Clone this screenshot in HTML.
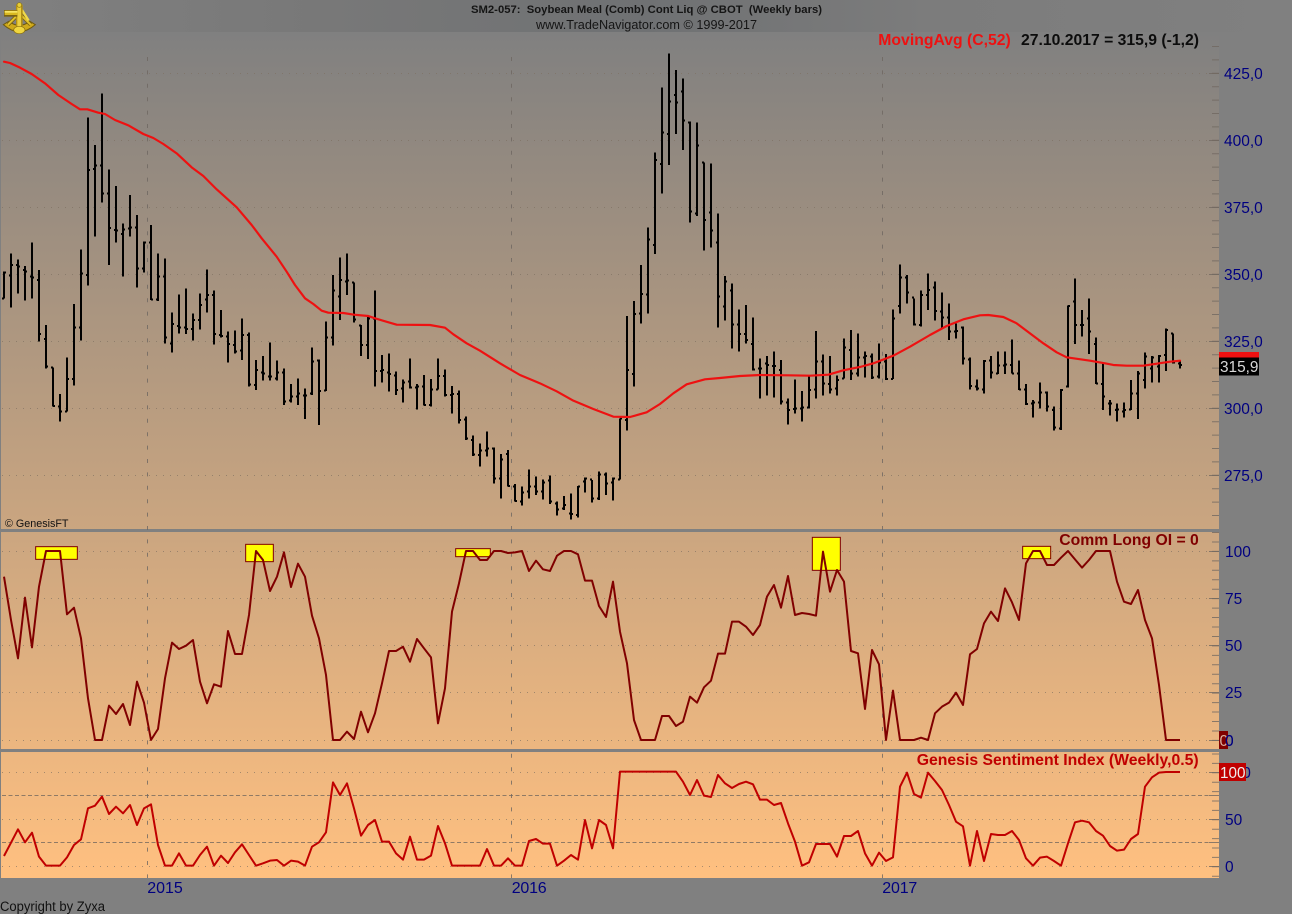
<!DOCTYPE html>
<html>
<head>
<meta charset="utf-8">
<title>SM2-057 Soybean Meal Weekly Chart</title>
<style>
html,body{margin:0;padding:0;background:#808080;width:1292px;height:914px;overflow:hidden}
svg{display:block;position:absolute;left:0;top:0}
text{font-family:"Liberation Sans",Arial,sans-serif;white-space:pre}
.ax{font-size:15.5px;fill:#000080}
.b{font-weight:bold;font-size:16px}
</style>
</head>
<body>
<svg width="1292" height="914" viewBox="0 0 1292 914" xmlns="http://www.w3.org/2000/svg">
<defs>
<linearGradient id="bg" gradientUnits="userSpaceOnUse" x1="0" y1="32" x2="0" y2="878">
<stop offset="0" stop-color="#808080"/><stop offset="1" stop-color="#ffc080"/>
</linearGradient>
<linearGradient id="st" x1="0" y1="0" x2="1" y2="0">
<stop offset="0" stop-color="#808080"/><stop offset=".25" stop-color="#787878"/><stop offset=".5" stop-color="#6f7173"/><stop offset=".72" stop-color="#7c7c7c"/><stop offset="1" stop-color="#808080"/>
</linearGradient>
</defs>
<rect width="1292" height="914" fill="#808080"/>
<rect width="1292" height="32" fill="url(#st)"/>
<rect x="1" y="32" width="1218" height="846" fill="url(#bg)"/>

<!-- axis ticks -->
<g fill="none" stroke="#706860">
<line x1="1215.5" y1="46" x2="1215.5" y2="527" stroke-width="7" stroke-dasharray="1 12.4" opacity=".8"/>
<line x1="1215.5" y1="532" x2="1215.5" y2="749" stroke-width="7" stroke-dasharray="1 8.45" opacity=".8"/>
<line x1="1215.5" y1="753.5" x2="1215.5" y2="878" stroke-width="7" stroke-dasharray="1 8.4" opacity=".8"/>
<path opacity=".8" d="M1209 73.5H1219M1209 140.5H1219M1209 207.5H1219M1209 274.5H1219M1209 341.5H1219M1209 408.5H1219M1209 475.5H1219M1209 551.5H1219M1209 598.5H1219M1209 645.5H1219M1209 692.5H1219M1209 740.5H1219M1209 772.5H1219M1209 795.5H1219M1209 819.5H1219M1209 842.5H1219M1209 866.5H1219"/>
</g>

<!-- dotted/dashed grid -->
<g fill="none" stroke="#7d6e60" stroke-width="1">
<path opacity=".65" stroke-dasharray="1 6" d="M2 73.5H1209M2 140.5H1209M2 207.5H1209M2 274.5H1209M2 341.5H1209M2 408.5H1209M2 475.5H1209M2 551.5H1209M2 598.5H1209M2 645.5H1209M2 692.5H1209M2 740.5H1209M2 772.5H1209M2 819.5H1209M2 866.5H1209"/>
<path opacity=".85" stroke-dasharray="4 2.5" d="M2 795.5H1209M2 842.5H1209"/>
</g>

<!-- separators -->
<rect x="1" y="529" width="1218" height="3" fill="#808080"/>
<rect x="1" y="749" width="1218" height="3" fill="#808080"/>

<!-- vertical grid -->
<g fill="none" stroke="#6e6660" stroke-width="1" stroke-dasharray="4 9.4" opacity=".8">
<path d="M147.5 57V878M511.5 57V878M882.5 57V878"/>
</g>

<g transform="scale(.333333)">
<!-- yellow boxes -->
<g fill="#ffff00" stroke="#800000" stroke-width="3">
<rect x="107" y="1640" width="125" height="38"/>
<rect x="737" y="1633" width="83" height="52"/>
<rect x="1367" y="1646" width="104" height="24"/>
<rect x="2437" y="1612" width="84" height="99"/>
<rect x="3068" y="1639" width="84" height="37"/>
</g>

<!-- price bars -->
<g fill="none" stroke="#000" stroke-width="6" shape-rendering="crispEdges">
<path transform="translate(0,690)" d="M12 125V205M6 205h6M12 127h6
M33 70V232M27 137h6M33 105h6
M54 88V190M48 105h6M54 110h6
M75 108V212M69 120h6M75 125h6
M96 37V205M90 140h6M96 142h6
M117 120V335M111 150h6M117 312h6
M138 285V415M132 327h6M138 410h6
M159 412V530M153 412h6M159 528h6
M180 492V575M174 530h6M180 545h6
M201 382V545M195 545h6M201 447h6
M222 222V467M216 447h6M222 292h6
M243 58V332M237 292h6M243 130h6
M264 -338V167M258 135h6M264 -180h6
M285 -255V20M279 -183h6M285 -193h6
M306 -410V-83M300 -193h6M306 -109h6
M327 -182V105M321 -109h6M327 -6h6
M348 -132V38M342 0h6M348 2h6
M369 -20V140M363 12h6M369 -2h6
M390 -105V20M384 -4h6M390 -7h6
M411 -45V173M405 -7h6M411 116h6
M432 35V128M426 116h6M432 38h6
M453 -15V210M447 38h6M453 208h6
M474 70V213M468 209h6M474 140h6
M495 85V340M489 140h6M495 323h6
M516 248V368M510 340h6M516 282h6
M537 193V310M531 288h6M537 293h6
M558 175V312M552 293h6M558 297h6
M579 250V332M573 297h6M579 270h6
M600 190V298M594 270h6M600 225h6
M621 118V248M615 208h6M621 195h6
M642 182V343M636 195h6M642 312h6
M663 240V322M657 315h6M663 318h6
M684 305V398M678 320h6M684 342h6
M705 302V370M699 345h6M705 365h6
M726 265V390M720 362h6M726 315h6
M747 308V470M741 315h6M747 463h6
M768 390V480M762 465h6M768 420h6
M789 378V452M783 428h6M789 430h6
M810 337V452M804 440h6M810 440h6
M831 392V452M825 445h6M831 428h6
M852 415V525M846 428h6M852 515h6
M873 462V518M867 512h6M873 500h6
M894 445V525M888 500h6M894 490h6
M915 475V567M909 497h6M915 497h6
M936 352V495M930 490h6M936 395h6
M957 388V585M951 392h6M957 483h6
M978 275V483M972 482h6M978 323h6
M999 135V347M993 323h6M999 182h6
M1020 82V270M1014 200h6M1020 150h6
M1041 70V195M1035 155h6M1041 152h6
M1062 157V278M1056 157h6M1062 268h6
M1083 285V378M1077 287h6M1083 345h6
M1104 258V387M1098 345h6M1104 265h6
M1125 182V470M1119 265h6M1125 423h6
M1146 375V458M1140 423h6M1146 420h6
M1167 370V485M1161 428h6M1167 432h6
M1188 425V495M1182 437h6M1188 480h6
M1209 448V518M1203 475h6M1209 458h6
M1230 385V475M1224 455h6M1230 472h6
M1251 462V538M1245 472h6M1251 470h6
M1272 435V527M1266 470h6M1272 525h6"/>
<path transform="translate(1290,690)" d="M3 447V530M-3 525h6M3 478h6
M24 385V478M18 478h6M24 438h6
M45 418V500M39 438h6M45 495h6
M66 468V550M60 495h6M66 492h6
M87 482V580M81 492h6M87 570h6
M108 560V630M102 568h6M108 625h6
M129 617V678M123 630h6M129 673h6
M150 640V710M144 675h6M150 662h6
M171 604V680M165 662h6M171 655h6
M192 652V760M186 655h6M192 745h6
M213 672V805M207 745h6M213 688h6
M234 660V770M228 672h6M234 768h6
M255 762V815M249 770h6M255 813h6
M276 770V827M270 815h6M276 787h6
M297 718V805M291 785h6M297 770h6
M318 740V795M312 770h6M318 785h6
M339 748V808M333 785h6M339 757h6
M360 737V822M354 752h6M360 815h6
M381 815V857M375 820h6M381 838h6
M402 798V840M396 835h6M402 825h6
M423 790V868M417 850h6M423 852h6
M444 768V862M438 855h6M444 770h6
M465 742V787M459 755h6M465 745h6
M486 750V818M480 748h6M486 805h6
M507 725V810M501 805h6M507 733h6
M528 728V795M522 733h6M528 760h6
M549 742V812M543 758h6M549 745h6
M570 565V748M564 748h6M570 565h6
M591 258V602M585 570h6M591 420h6
M612 213V470M606 432h6M612 252h6
M633 105V280M627 250h6M633 192h6
M654 -8V250M648 193h6M654 28h6
M675 -233V72M669 45h6M675 -210h6
M696 -428V-110M690 -198h6M696 -292h6
M717 -530V-195M711 -288h6M717 -385h6
M738 -480V-288M732 -405h6M738 -382h6
M759 -455V-240M753 -415h6M759 -328h6
M780 -325V-22M774 -323h6M780 -55h6
M801 -323V-42M795 -50h6M801 -253h6
M822 -203V62M816 -202h6M822 -30h6
M843 -200V53M837 -52h6M843 2h6
M864 -50V292M858 38h6M864 200h6
M885 138V272M879 230h6M885 155h6
M906 160V355M900 182h6M906 283h6
M927 238V365M921 283h6M927 312h6
M948 225V340M942 312h6M948 330h6
M969 262V422M963 342h6M969 418h6
M990 385V505M984 415h6M990 415h6
M1011 378V497M1005 400h6M1011 405h6
M1032 365V503M1026 408h6M1032 408h6
M1053 390V523M1047 420h6M1053 515h6
M1074 505V583M1068 518h6M1074 540h6
M1095 448V550M1089 537h6M1095 535h6
M1116 483V575M1110 535h6M1116 533h6
M1137 440V535M1131 533h6M1137 480h6
M1158 303V505M1152 478h6M1158 395h6
M1179 373V497M1173 395h6M1179 460h6
M1200 378V490M1194 462h6M1200 478h6
M1221 437V497M1215 475h6M1221 450h6
M1242 325V445M1236 445h6M1242 352h6
M1263 300V450M1257 360h6M1263 430h6
M1284 310V440M1278 430h6M1284 382h6"/>
<path transform="translate(2580,690)" d="M15 365V442M9 382h6M15 378h6
M36 370V447M30 380h6M36 442h6
M57 340V445M51 440h6M57 397h6
M78 372V450M72 395h6M78 447h6
M99 238V447M93 447h6M99 265h6
M120 103V250M114 228h6M120 143h6
M141 135V220M135 142h6M141 188h6
M162 205V287M156 203h6M162 283h6
M183 182V290M177 285h6M183 195h6
M204 130V240M198 195h6M204 180h6
M225 155V272M219 172h6M225 243h6
M246 187V297M240 245h6M246 262h6
M267 220V330M261 262h6M267 305h6
M288 280V325M282 305h6M288 303h6
M309 290V403M303 292h6M309 385h6
M330 382V478M324 388h6M330 468h6
M351 448V482M345 470h6M351 475h6
M372 390V490M366 478h6M372 393h6
M393 378V445M387 392h6M393 428h6
M414 365V432M408 430h6M414 407h6
M435 365V432M429 407h6M435 403h6
M456 328V430M450 405h6M456 430h6
M477 392V480M471 430h6M477 478h6
M498 462V525M492 478h6M498 522h6
M519 510V562M513 520h6M519 518h6
M540 458V535M534 517h6M540 488h6
M561 485V545M555 488h6M561 530h6
M582 530V602M576 540h6M582 592h6
M603 477V600M597 595h6M603 480h6
M624 227V473M618 470h6M624 228h6
M645 145V342M639 215h6M645 285h6
M666 240V320M660 285h6M666 285h6
M687 205V372M681 265h6M687 305h6
M708 322V462M702 342h6M708 460h6
M729 400V540M723 462h6M729 500h6
M750 510V557M744 520h6M750 520h6
M771 520V575M765 540h6M771 538h6
M792 517V563M786 545h6M792 540h6
M813 450V540M807 538h6M813 490h6
M834 423V567M828 490h6M834 430h6
M855 367V475M849 450h6M855 380h6
M876 378V458M870 415h6M876 382h6
M897 375V458M891 410h6M897 378h6
M918 295V423M912 375h6M918 300h6
M939 310V400M933 310h6M939 397h6
M960 395V415M954 400h6M960 405h6"/>
</g>

<!-- moving average -->
<path fill="none" stroke="#ee1111" stroke-width="6.5" stroke-linejoin="round" stroke-linecap="round" d="M12 185L30 189 60 203 95 222 135 250 175 285 215 312 240 328 262 328 295 338 315 342 345 360 385 376 430 402 460 414 490 432 530 460 575 502 610 528 650 568 710 622 755 675 785 715 830 770 860 815 885 855 915 895 940 912 965 932 985 938 1030 939 1062 944 1105 948 1125 955 1190 974 1290 975 1335 983 1360 1003 1400 1030 1440 1052 1500 1090 1560 1125 1620 1150 1670 1174 1720 1202 1780 1227 1840 1250 1890 1251 1940 1237 1980 1212 2020 1180 2060 1153 2115 1138 2160 1134 2220 1128 2280 1125 2365 1126 2430 1127 2485 1124 2530 1111 2580 1101 2620 1090 2680 1067 2730 1040 2790 1005 2840 978 2890 958 2940 946 2965 945 3010 951 3050 970 3090 1000 3130 1030 3170 1057 3200 1072 3270 1082 3315 1090 3340 1095 3380 1097 3430 1097 3470 1091 3510 1085 3540 1082"/>

<!-- Comm Long OI -->
<g fill="none" stroke="#800000" stroke-width="6" stroke-linejoin="round">
<path transform="translate(0,1575)" d="M12 155L33 285 54 400 75 218 96 367 117 185 138 78 159 78 180 78 201 268 222 248 243 340 264 520 285 645 306 645 327 542 348 567 369 537 390 600 411 470 432 533 453 645 474 612 495 460 516 353 537 372 558 362 579 345 600 470 621 535 642 478 663 485 684 318 705 387 726 387 747 270 768 78 789 105 810 198 831 155 852 82 873 186 894 116 915 155 936 272 957 340 978 450 999 645 1020 645 1041 620 1062 642 1083 560 1104 622 1125 565 1146 475 1167 378 1188 378 1209 365 1230 410 1251 342 1272 370 1293 397 1314 595 1335 490 1356 260 1377 175 1398 78 1419 78 1440 105 1461 105 1482 78 1503 78 1524 84 1545 82 1566 78 1587 138 1608 107 1629 133 1650 138 1671 92 1692 78 1713 78 1734 88 1755 167 1776 167 1797 243 1818 276 1839 170 1860 320 1881 415 1902 585 1923 645 1944 645 1965 645 1986 573 2007 573 2028 603 2049 590 2070 515 2091 533 2112 487 2133 467 2154 386 2175 386 2196 290 2217 290 2238 305 2259 330 2280 300 2301 215 2322 180 2343 248 2364 153 2385 270 2406 264 2427 267 2448 272 2469 80 2490 200 2511 135 2532 170 2553 378 2574 385 2595 552 2616 375 2637 418 2658 645 2679 497 2700 645 2721 645 2742 645 2763 638 2784 645 2805 565 2826 545 2847 533 2868 503 2889 540 2910 388 2931 372 2952 295 2973 260 2994 288 3015 190 3036 232 3057 285 3078 115 3099 78 3120 78 3141 120 3162 120 3183 98 3204 78 3225 103 3246 128 3267 105 3288 78 3309 78 3330 78 3351 170 3372 230 3393 237 3414 195 3435 285 3456 340 3477 480 3498 645 3519 645 3540 645"/>
</g>

<!-- Genesis Sentiment -->
<g fill="none" stroke="#c00000" stroke-width="6" stroke-linejoin="round">
<path transform="translate(0,2235)" d="M12 333L33 293 54 253 75 292 96 263 117 335 138 362 159 362 180 362 201 337 222 300 243 283 264 190 285 182 306 155 327 207 348 185 369 205 390 180 411 240 432 190 453 178 474 300 495 362 516 362 537 325 558 362 579 362 600 330 621 305 642 362 663 332 684 354 705 322 726 298 747 330 768 362 789 355 810 347 831 345 852 362 873 347 894 350 915 362 936 305 957 292 978 262 999 112 1020 150 1041 115 1062 190 1083 272 1104 240 1125 225 1146 290 1167 290 1188 325 1209 344 1230 275 1251 344 1272 344 1293 332 1314 243 1335 295 1356 362 1377 362 1398 362 1419 362 1440 362 1461 312 1482 362 1503 362 1524 340 1545 362 1566 362 1587 288 1608 282 1629 296 1650 296 1671 362 1692 347 1713 330 1734 344 1755 225 1776 310 1797 225 1818 240 1839 310 1860 80 1881 80 2028 80 2049 110 2070 150 2091 105 2112 152 2133 156 2154 90 2175 115 2196 129 2217 117 2238 110 2259 118 2280 164 2301 164 2322 180 2343 174 2364 235 2385 290 2406 362 2427 352 2448 297 2469 297 2490 297 2511 335 2532 273 2553 273 2574 258 2595 325 2616 362 2637 323 2658 348 2679 337 2700 125 2721 83 2742 147 2763 158 2784 83 2805 108 2826 135 2847 180 2868 230 2889 244 2910 362 2931 258 2952 348 2973 267 2994 270 3015 270 3036 258 3057 285 3078 340 3099 362 3120 338 3141 335 3162 348 3183 362 3204 295 3225 232 3246 227 3267 232 3288 258 3309 272 3330 303 3351 317 3372 314 3393 282 3414 267 3435 125 3456 97 3477 83 3498 81 3519 81 3540 81"/>
</g>

<!-- logo -->
<g>
<path d="M10 74Q58 116 106 74L90 64Q58 88 26 64Z" fill="#cfa91a" stroke="#6e5a10" stroke-width="3"/>
<path d="M58 40L24 74M58 40L92 74" stroke="#7a6212" stroke-width="11" fill="none"/>
<path d="M58 40L24 74M58 40L92 74" stroke="#e0c22c" stroke-width="6" fill="none"/>
<path d="M66 30L86 62" stroke="#f0d84a" stroke-width="7" fill="none"/>
<rect x="48" y="14" width="20" height="86" fill="#b08f16"/>
<rect x="52" y="14" width="11" height="84" fill="#ecd040"/>
<circle cx="58" cy="15" r="7" fill="#e8cd36" stroke="#8a7010" stroke-width="2"/>
<rect x="12" y="30" width="40" height="20" fill="#7a6212"/>
<rect x="14" y="32" width="38" height="13" fill="#d9b820"/>
<rect x="14" y="33" width="38" height="5" fill="#f7e565"/>
<ellipse cx="58" cy="90" rx="17" ry="11" fill="#f0d640" stroke="#8a7010" stroke-width="2"/>
</g>
</g>

<!-- axis labels -->
<g class="ax">
<text class="ax" x="1224" y="79">425,0</text>
<text class="ax" x="1224" y="146">400,0</text>
<text class="ax" x="1224" y="213">375,0</text>
<text class="ax" x="1224" y="280">350,0</text>
<text class="ax" x="1224" y="347">325,0</text>
<text class="ax" x="1224" y="414">300,0</text>
<text class="ax" x="1224" y="481">275,0</text>
<text class="ax" x="1225" y="557" font-size="15">100</text>
<text class="ax" x="1225" y="604">75</text>
<text class="ax" x="1225" y="651">50</text>
<text class="ax" x="1225" y="698">25</text>
<text class="ax" x="1225" y="746">0</text>
<text class="ax" x="1225" y="778">100</text>
<text class="ax" x="1225" y="825">50</text>
<text class="ax" x="1225" y="872">0</text>
</g>

<!-- current value flags -->
<rect x="1219" y="352" width="40" height="18" fill="#ee1111"/>
<rect x="1219" y="357.5" width="40" height="18" fill="#000"/>
<text x="1220" y="372" font-size="15.5" fill="#d8d8d8" textLength="38.5" lengthAdjust="spacingAndGlyphs">315,9</text>
<rect x="1219" y="731" width="9" height="18" fill="#800000"/>
<text x="1219.5" y="746" font-size="15.5" fill="#d8b0a0">0</text>
<text class="ax" x="1225" y="746">0</text>
<rect x="1219" y="763" width="27" height="18" fill="#c00000"/>
<text x="1220" y="778" font-size="15.5" fill="#eeeeee" textLength="25.5" lengthAdjust="spacingAndGlyphs">100</text>

<!-- date axis -->
<text x="147.3" y="893" font-size="16" fill="#000080" textLength="35.5">2015</text>
<text x="511.7" y="893" font-size="16" fill="#000080" textLength="35">2016</text>
<text x="882.3" y="893" font-size="16" fill="#000080" textLength="35">2017</text>

<!-- titles -->
<text x="471" y="13" font-size="11px" font-weight="bold" fill="#151515" textLength="351" lengthAdjust="spacingAndGlyphs">SM2-057:  Soybean Meal (Comb) Cont Liq @ CBOT  (Weekly bars)</text>
<text x="536" y="29" font-size="12.5px" fill="#151515" textLength="221" lengthAdjust="spacingAndGlyphs">www.TradeNavigator.com © 1999-2017</text>
<text class="b" x="878.3" y="45" fill="#ee1111" textLength="132.5" lengthAdjust="spacingAndGlyphs">MovingAvg (C,52)</text>
<text class="b" x="1021" y="45" fill="#0c0c0c" textLength="178" lengthAdjust="spacingAndGlyphs">27.10.2017 = 315,9 (-1,2)</text>
<text class="b" x="1059.3" y="545" fill="#800000" textLength="139.5" lengthAdjust="spacingAndGlyphs">Comm Long OI = 0</text>
<text class="b" x="916.7" y="765" fill="#c00000" textLength="282" lengthAdjust="spacingAndGlyphs">Genesis Sentiment Index (Weekly,0.5)</text>
<text x="5" y="527" font-size="11px" fill="#111" textLength="63.5" lengthAdjust="spacingAndGlyphs">© GenesisFT</text>
<text x="0" y="911" font-size="13.5px" fill="#111" textLength="105" lengthAdjust="spacingAndGlyphs">Copyright by Zyxa</text>
</svg>
</body>
</html>
